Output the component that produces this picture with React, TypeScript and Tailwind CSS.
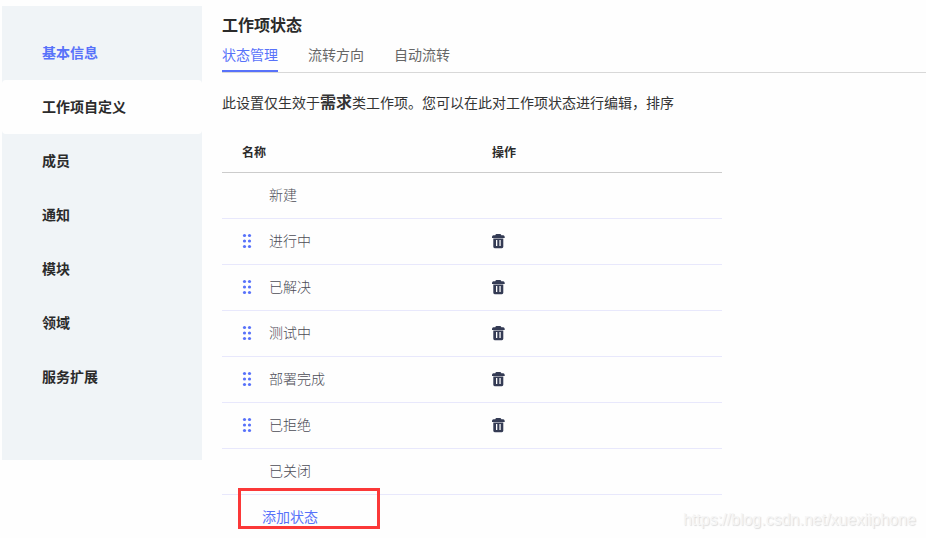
const menus = ['基本信息', '工作项自定义', '成员', '通知', '模块', '领域', '服务扩展'];

const tabs = ['状态管理', '流转方向', '自动流转'];

const states = [
  { name: '新建', editable: false },
  { name: '进行中', editable: true },
  { name: '已解决', editable: true },
  { name: '测试中', editable: true },
  { name: '部署完成', editable: true },
  { name: '已拒绝', editable: true },
  { name: '已关闭', editable: false }
];

function DragHandle() {
  return (
    <svg className="w-2.5 h-4" viewBox="0 0 10 16" fill="#5872fa" aria-hidden="true">
      {[2.5, 8, 13.5].map((y) => (
        <g key={y}>
          <circle cx="2.5" cy={y} r="1.6" />
          <circle cx="7.5" cy={y} r="1.6" />
        </g>
      ))}
    </svg>
  );
}

function TrashIcon() {
  return (
    <svg className="w-3.5 h-4" viewBox="0 0 14 16" aria-hidden="true">
      <path
        fill="#343b54"
        fillRule="evenodd"
        d="M3.6 1.6Q3.8 1 4.4 1h3.8q.6 0 .8.6l.3.6h1.9q.8 0 1.2.8l.3 1v1H0V4l.3-1q.4-.8 1.2-.8h1.8zM1.3 5.6h10v8.2a1.4 1.4 0 0 1-1.4 1.4H2.7a1.4 1.4 0 0 1-1.4-1.4zM4 7v6h1.3V7zM7.4 7v6h1.3V7z"
      />
    </svg>
  );
}

function Sidebar() {
  return (
    <nav className="w-[200px] shrink-0 bg-[#f0f4f7] pt-5 pb-14">
      {menus.map((menu, index) => (
        <a
          key={menu}
          href="#"
          className={`flex h-[54px] items-center rounded-sm pb-0.5 pl-10 text-sm font-bold ${
            index === 0 ? 'text-[#5872fa]' : 'text-[#2b2b2b]'
          } ${index === 1 ? 'bg-[#fefefe]' : ''}`}
        >
          {menu}
        </a>
      ))}
    </nav>
  );
}

function StateTable() {
  return (
    <table className="mt-[18px] w-full max-w-[500px] table-fixed border-collapse text-left">
      <thead>
        <tr className="h-10 border-b border-[#cccccc] text-xs text-[#2b2b2b]">
          <th className="w-1/2 pl-5 font-bold">名称</th>
          <th className="w-1/2 pl-5 font-bold">操作</th>
        </tr>
      </thead>
      <tbody>
        {states.map((state) => (
          <tr key={state.name} className="h-[46px] border-b border-[#e8e8fc]">
            <td className="pl-5 text-sm font-light text-[#4c4c56]">
              <div className="flex items-center gap-4">
                <span className="w-[11px]">{state.editable && <DragHandle />}</span>
                <span className="pb-0.5">{state.name}</span>
              </div>
            </td>
            <td className="pl-5">
              {state.editable && (
                <button type="button" aria-label={`删除${state.name}`} className="block">
                  <TrashIcon />
                </button>
              )}
            </td>
          </tr>
        ))}
      </tbody>
    </table>
  );
}

export default function App() {
  return (
    <div className="relative flex min-h-screen items-start gap-5 bg-[#fefefe] pt-1.5 pl-0.5 font-['Noto_Sans_CJK_SC',sans-serif]">
      <Sidebar />

      <main className="min-w-0 flex-1 pt-1.5">
        <h1 className="text-base leading-6 font-bold text-[#2b2b2b]">工作项状态</h1>

        {/* Tabs */}
        <div className="mt-0.5 flex gap-[30px] border-b border-[#d8d8d8] text-sm">
          {tabs.map((tab, index) => (
            <button
              key={tab}
              type="button"
              className={`h-[34px] border-b-2 ${
                index === 0 ? 'border-[#5872fa] text-[#5872fa]' : 'border-transparent text-[#666666]'
              }`}
            >
              {tab}
            </button>
          ))}
        </div>

        <p className="mt-4 text-sm leading-6 text-[#333333]">
          此设置仅生效于<strong className="text-base leading-6 font-bold">需求</strong>
          类工作项。您可以在此对工作项状态进行编辑，排序
        </p>

        <StateTable />

        <div className="relative flex h-[42px] items-center pl-10">
          <button type="button" className="text-sm text-[#5872fa]">
            添加状态
          </button>
          {/* Highlight frame */}
          <div className="pointer-events-none absolute -top-[7px] left-4 h-[41px] w-[142px] border-3 border-[#fb3838]" />
        </div>
      </main>

      <span className="absolute right-2.5 bottom-2 font-['Liberation_Sans',sans-serif] text-base leading-5 text-[#f6f6f6] [text-shadow:1px_1px_1px_#dcdcdc]">
        https://blog.csdn.net/xuexiiphone
      </span>
    </div>
  );
}
